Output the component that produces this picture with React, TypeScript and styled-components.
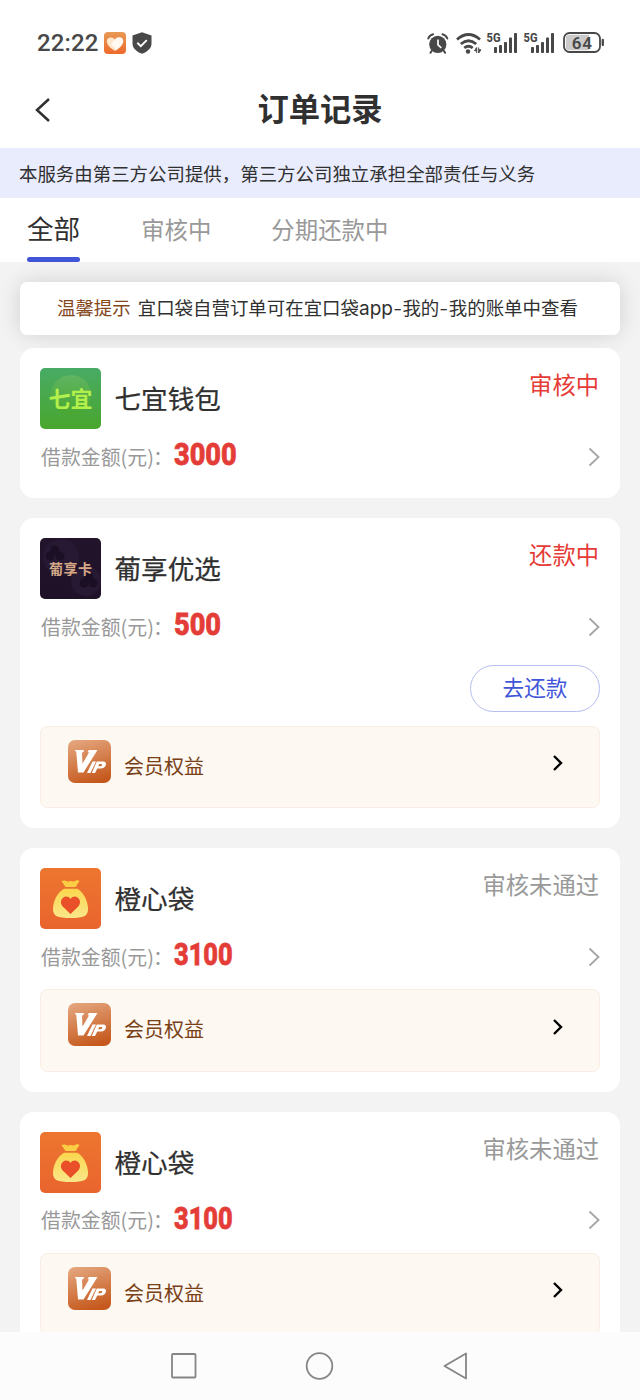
import React from 'react';
import styled, { createGlobalStyle } from 'styled-components';

const Global = createGlobalStyle`
  * { box-sizing: border-box; }
  body {
    margin: 0;
    background: #f3f3f4;
    font-family: "Noto Sans CJK SC", sans-serif;
    color: #303030;
    overflow: hidden;
  }
  svg { display: block; flex: none; overflow: visible; }
`;

const Screen = styled.div`
  width: 640px;
  height: 1400px;
  display: flex;
  flex-direction: column;
  overflow: hidden;
  background: #f3f3f4;
`;

const StatusBar = styled.div`
  height: 86px;
  flex: none;
  background: #fff;
  display: flex;
  align-items: center;
  justify-content: space-between;
  padding: 0 35px 0 37px;
`;

const StatusGroup = styled.div<{ $gap: number }>`
  display: flex;
  align-items: center;
  gap: ${(p) => p.$gap}px;
`;

const Clock = styled.span`
  width: 61px;
  font: 500 24px/30px Roboto, sans-serif;
  letter-spacing: 0.1px;
  color: #484848;
  white-space: nowrap;
`;

const Header = styled.header`
  height: 62px;
  flex: none;
  background: #fff;
  display: grid;
  grid-template-columns: 80px 1fr 80px;
  align-items: center;
  padding-bottom: 16px;
`;

const BackButton = styled.button`
  border: 0;
  background: none;
  padding: 2px 0 0 34px;
`;

const Title = styled.h1`
  margin: 0;
  padding-bottom: 2px;
  text-align: center;
  font-size: 31.3px;
  line-height: 44px;
  font-weight: 700;
`;

const Notice = styled.div`
  height: 50px;
  flex: none;
  padding-left: 19px;
  background: #e9ecfd;
  font-size: 18.45px;
  line-height: 50px;
  white-space: nowrap;
`;

const Tabs = styled.nav`
  height: 64px;
  flex: none;
  display: flex;
  background: #fff;
  padding-left: 27px;
`;

const Tab = styled.div<{ $active?: boolean; $gap?: number }>`
  display: flex;
  flex-direction: column;
  justify-content: space-between;
  margin-right: ${(p) => p.$gap ?? 0}px;
  font-size: ${(p) => (p.$active ? 26.6 : 23.4)}px;
  line-height: ${(p) => (p.$active ? 59 : 63)}px;
  color: ${(p) => (p.$active ? '#303030' : '#999')};
  white-space: nowrap;
  &::after {
    content: "";
    display: ${(p) => (p.$active ? 'block' : 'none')};
    height: 5px;
    border-radius: 3px;
    background: #4155d9;
  }
`;

const Content = styled.main`
  flex: 1;
  min-height: 0;
  overflow: hidden;
  padding: 20px 20px 0;
`;

const Tip = styled.div`
  height: 53px;
  border-radius: 7px;
  background: #fff;
  box-shadow: 0 0 22px rgba(0, 0, 0, 0.14);
  padding-left: 37px;
  font-size: 18.45px;
  line-height: 50px;
  white-space: nowrap;
  margin-bottom: 13px;
`;

const TipLabel = styled.span`
  color: #84471c;
  margin-right: 7px;
`;

const Latin = styled.span`
  font-family: Inter, sans-serif;
  font-size: 19px;
  line-height: 1;
`;

const Dash = styled.span`
  display: inline-block;
  width: 9.5px;
  line-height: 1;
  text-align: center;
  transform: scaleX(1.3);
`;

const Card = styled.section`
  border-radius: 14px;
  background: #fff;
  padding: 20px;
  margin-bottom: 20px;
`;

const CardTop = styled.div`
  display: flex;
  height: 61px;
`;

const Name = styled.div`
  margin-left: 13.5px;
  flex: 1;
  font-size: 26.6px;
  line-height: 59px;
  font-weight: 400;
  -webkit-text-stroke: 0.25px #303030;
`;

const Status = styled.div<{ $muted: boolean }>`
  margin-right: 1px;
  font-size: 23.3px;
  line-height: 32px;
  color: ${(p) => (p.$muted ? '#999' : '#e63b36')};
`;

const AmountRow = styled.div`
  display: flex;
  align-items: center;
  height: 49px;
  padding: 6px 0 0 1px;
`;

const AmountLabel = styled.span`
  width: 132.5px;
  font-size: 19.9px;
  line-height: 30px;
  color: #999;
  white-space: nowrap;
`;

const Colon = styled.span`
  margin-left: -1px;
`;

const Amount = styled.span<{ $scale: number }>`
  flex: 1;
  font: 800 32px/36px Roboto, sans-serif;
  -webkit-text-stroke: 0.8px #e43d37;
  color: #e43d37;
  transform: scaleX(${(p) => p.$scale});
  transform-origin: left center;
  padding-bottom: 5px;
`;

const Actions = styled.div`
  display: flex;
  justify-content: flex-end;
  margin: 17px 0 13.5px;
`;

const PayButton = styled.button`
  width: 130px;
  height: 47px;
  border: 1.5px solid #b6bdf0;
  border-radius: 24px;
  background: #fff;
  color: #4155d9;
  font: 400 21.6px/40px "Noto Sans CJK SC", sans-serif;
  padding: 0 0 3px;
`;

const Benefits = styled.div`
  height: 82.5px;
  margin: 11px 0 0;
  border: 1px solid #faeee4;
  border-radius: 7px;
  background: #fdf8f2;
  display: flex;
  align-items: flex-start;
  padding: 13px 34px 0 27px;
`;

const BenefitsLabel = styled.span`
  flex: 1;
  margin-left: 13px;
  font-size: 20px;
  line-height: 51px;
  color: #793f16;
`;

const ChevronSlot = styled.span`
  padding-top: 14.5px;
`;

const NavBar = styled.footer`
  height: 68px;
  flex: none;
  background: #fcfcfc;
  display: flex;
  justify-content: center;
  align-items: center;
  gap: 108px;
`;

const StatusHeart = () => (
  <svg width="22" height="22" viewBox="0 0 22 22">
    <defs>
      <linearGradient id="heartBg" x1="0" y1="0" x2="0" y2="1">
        <stop offset="0" stopColor="#e89a55" />
        <stop offset="1" stopColor="#ed6a2c" />
      </linearGradient>
    </defs>
    <rect width="22" height="22" rx="4" fill="url(#heartBg)" />
    <path d="M11 19C6 15.8 2.8 12.8 2.8 9c0-3.8 5.4-5 8.2-1.5C13.5 3.8 19.2 5 19.2 9.2c0 3.5-3.4 6.8-8.2 9.8z" fill="#ffe6cc" />
    <path d="M11 7.5C13.5 3.8 19.2 5 19.2 9.2c0 3-3 6-7 8.5L7 12z" fill="#fff" opacity=".75" />
  </svg>
);

const Shield = () => (
  <svg width="20" height="22" viewBox="0 0 20 22">
    <path d="M10 .3L19.5 3.5v8c0 5-4.5 8.5-9.5 10.3C5 20 .5 16.5.5 11.5v-8z" fill="#484848" />
    <path d="M5.3 10.8l3.5 3.3 6-6" fill="none" stroke="#fff" strokeWidth="1.9" />
  </svg>
);

const Alarm = () => (
  <svg width="21" height="21" viewBox="0 0 21 21">
    <circle cx="9.8" cy="11.3" r="8.6" fill="#484848" />
    <path d="M.3 5.5Q1.6 2.2 5.1 1.3M19.3 5.5Q18 2.2 14.5 1.3M4 17.5l-1.5 2.3M15.6 17.5l1.5 2.3" fill="none" stroke="#484848" strokeWidth="2" strokeLinecap="round" />
    <path d="M10 6.5v5.3l3.3 3" fill="none" stroke="#fff" strokeWidth="1.7" />
  </svg>
);

const Wifi = () => (
  <svg width="24" height="21" viewBox="0 0 24 21">
    <g fill="none" stroke="#484848" strokeWidth="2.8">
      <path d="M1 6.5Q12.5-3.5 24 6.5" />
      <path d="M4.8 11Q12.5 4.5 20.2 11" />
      <path d="M8.3 15Q12.5 11.5 16.7 15" />
    </g>
    <circle cx="12" cy="18.5" r="2.2" fill="#484848" />
    <path d="M20.7 20v-5.5l-2.2 3.2h2.2M22.7 14.5V20l2.2-3.2h-2.2" fill="#484848" stroke="#484848" strokeWidth="1" />
  </svg>
);

const Signal = () => (
  <svg width="30" height="24" viewBox="0 0 30 24">
    <text x="-.5" y="10.8" fontFamily="Roboto" fontWeight="800" fontSize="13" textLength="14" lengthAdjust="spacingAndGlyphs" fill="#484848">5G</text>
    {[6, 8, 11, 15.5, 20].map((h, i) => (
      <rect key={h} x={7 + i * 5} y={22 - h} width="3" height={h} rx=".8" fill="#484848" />
    ))}
  </svg>
);

const Battery = () => (
  <svg width="44" height="22" viewBox="-2 0 44 22">
    <rect x="1" y="1" width="36" height="19" rx="5.5" fill="#fff" stroke="#484848" strokeWidth="1.8" />
    <path d="M6 2.8h20v15.4H6a3 3 0 0 1-3.2-3V6A3 3 0 0 1 6 2.8z" fill="#cbcbcb" />
    <path d="M39.8 8v5" stroke="#484848" strokeWidth="2.3" strokeLinecap="round" />
    <text x="19.3" y="16.7" textAnchor="middle" fontFamily="Roboto" fontWeight="600" fontSize="17" letterSpacing=".8" fill="#484848">64</text>
  </svg>
);

type LogoKind = 'qiyi' | 'puxiang' | 'bag';

const Logo = ({ kind, id }: { kind: LogoKind; id: string }) => (
  <svg width="61" height="61" viewBox="0 0 61 61">
    <defs>
      <linearGradient id={`${id}-bg`} x1="0" y1="0" x2="0" y2="1">
        <stop offset="0" stopColor={kind === 'qiyi' ? '#48ab65' : kind === 'bag' ? '#ed762f' : '#21142b'} />
        <stop offset="1" stopColor={kind === 'qiyi' ? '#49a62d' : kind === 'bag' ? '#e9642e' : '#1e1128'} />
      </linearGradient>
      <linearGradient id={`${id}-fg`} x1="0" y1="0" x2="0" y2="1">
        <stop offset="0" stopColor={kind === 'qiyi' ? '#69b962' : '#fbd64e'} />
        <stop offset="1" stopColor={kind === 'qiyi' ? '#49a62d' : '#fae78a'} />
      </linearGradient>
    </defs>
    <rect width="61" height="61" rx="5" fill={`url(#${id}-bg)`} />
    {kind === 'qiyi' && (
      <>
        <circle cx="31" cy="27" r="20" fill={`url(#${id}-fg)`} opacity=".7" />
        <text x="30.5" y="38.8" textAnchor="middle" fontFamily="Noto Sans CJK SC" fontWeight="700" fontSize="22" fill="#b4f04b">七宜</text>
      </>
    )}
    {kind === 'puxiang' && (
      <>
        <circle cx="21" cy="19" r="18" fill="#271933" />
        <circle cx="46" cy="43" r="15" fill="#271933" />
        <g fill="#1b0f25">
          <circle cx="15" cy="12" r="4.5" /><circle cx="10" cy="18" r="4.5" /><circle cx="20" cy="18" r="4.5" />
          <circle cx="49" cy="39" r="4.5" /><circle cx="44" cy="45" r="4.5" /><circle cx="53" cy="45" r="4.5" />
        </g>
        <text x="9" y="36" textLength="43" lengthAdjust="spacing" fontFamily="Noto Sans CJK SC" fontWeight="600" fontSize="14" fill="#d5a785">葡享卡</text>
      </>
    )}
    {kind === 'bag' && (
      <>
        <path d="M21.5 13c2.5-1 4.5-.5 6 .7 2-1 4.500-1 6.500 0 1.500-1.500 3.500-2 5.500-.7l-4 6h-10z" fill="#fbcf43" />
        <path d="M24 20.700h13.500c6.500 3.800 10.500 13 10.500 20.300 0 7-4 9-17.500 9S13 48 13 41c0-7.300 4-16.500 11-20.300z" fill={`url(#${id}-fg)`} />
        <path d="M30.500 46L22.700 38.500c-5.500-6.500 3.300-14 7.800-7.500 4.500-6.500 13.300 1 7.800 7.500z" fill="#e94f28" />
      </>
    )}
  </svg>
);

const VipIcon = ({ id }: { id: string }) => (
  <svg width="43" height="43" viewBox="0 0 43 43">
    <defs>
      <linearGradient id={`${id}-vip`} x1="0.3" y1="0" x2="0.6" y2="1">
        <stop offset="0" stopColor="#e3a37a" />
        <stop offset="1" stopColor="#c5581c" />
      </linearGradient>
    </defs>
    <rect width="43" height="43" rx="7" fill={`url(#${id}-vip)`} />
    <path d="M6.500 10h9.500l-.5 2-1.500.5.500 11 6.500-11-1.300-.5L20.800 10h8.700L15.500 32.500H10L8.300 12z" fill="#fff" />
    <path d="M24.500 21.500h3.500L22.500 33H19zM28.800 21.500h6.700c4 0 3 7-2.500 7h-3.700L27 33h-3.200zM31.200 24l-1 2.200h2.300c1.800 0 2.300-2.200.7-2.200z" fill="#fff" fillRule="evenodd" />
  </svg>
);

interface Order {
  id: string;
  logo: LogoKind;
  name: string;
  amount: string;
  status: string;
  muted: boolean;
  pay: boolean;
  vip: boolean;
}

const orders: Order[] = [
  { id: 'o1', logo: 'qiyi', name: '七宜钱包', amount: '3000', status: '审核中', muted: false, pay: false, vip: false },
  { id: 'o2', logo: 'puxiang', name: '葡享优选', amount: '500', status: '还款中', muted: false, pay: true, vip: true },
  { id: 'o3', logo: 'bag', name: '橙心袋', amount: '3100', status: '审核未通过', muted: true, pay: false, vip: true },
  { id: 'o4', logo: 'bag', name: '橙心袋', amount: '3100', status: '审核未通过', muted: true, pay: false, vip: true },
];

const OrderCard = ({ order }: { order: Order }) => (
  <Card>
    <CardTop>
      <Logo kind={order.logo} id={order.id} />
      <Name>{order.name}</Name>
      <Status $muted={order.muted}>{order.status}</Status>
    </CardTop>
    <AmountRow>
      <AmountLabel>借款金额(元)<Colon>：</Colon></AmountLabel>
      <Amount $scale={order.amount.includes('1') ? 0.795 : 0.85}>{order.amount}</Amount>
      <svg width="12" height="20" viewBox="0 0 12 20">
        <path d="M1.500 1.500l9 8.500-9 8.500" fill="none" stroke="#a5a5a5" strokeWidth="1.8" />
      </svg>
    </AmountRow>
    {order.pay && (
      <Actions>
        <PayButton>去还款</PayButton>
      </Actions>
    )}
    {order.vip && (
      <Benefits>
        <VipIcon id={order.id} />
        <BenefitsLabel>会员权益</BenefitsLabel>
        <ChevronSlot>
          <svg width="14" height="18" viewBox="0 0 14 18">
            <path d="M3 2l7 7-7 7" fill="none" stroke="#000" strokeWidth="2.4" />
          </svg>
        </ChevronSlot>
      </Benefits>
    )}
  </Card>
);

export default function App() {
  return (
    <Screen>
      <Global />
      <StatusBar>
        <StatusGroup $gap={6}>
          <Clock>22:22</Clock>
          <StatusHeart />
          <Shield />
        </StatusGroup>
        <StatusGroup $gap={7}>
          <Alarm />
          <Wifi />
          <Signal />
          <Signal />
          <Battery />
        </StatusGroup>
      </StatusBar>
      <Header>
        <BackButton aria-label="返回">
          <svg width="17" height="26" viewBox="0 0 17 26">
            <path d="M15 2L3 13l12 11" fill="none" stroke="#303030" strokeWidth="2.5" />
          </svg>
        </BackButton>
        <Title>订单记录</Title>
      </Header>
      <Notice>本服务由第三方公司提供，第三方公司独立承担全部责任与义务</Notice>
      <Tabs>
        <Tab $active $gap={61}>全部</Tab>
        <Tab $gap={60}>审核中</Tab>
        <Tab>分期还款中</Tab>
      </Tabs>
      <Content>
        <Tip>
          <TipLabel>温馨提示</TipLabel>
          宜口袋自营订单可在宜口袋<Latin>app</Latin><Dash>-</Dash>我的<Dash>-</Dash>我的账单中查看
        </Tip>
        {orders.map((o) => (
          <OrderCard key={o.id} order={o} />
        ))}
      </Content>
      <NavBar>
        <svg width="28" height="28" viewBox="0 0 28 28">
          <rect x="2" y="2" width="23.5" height="23.5" rx="1" fill="none" stroke="#858585" strokeWidth="1.8" />
        </svg>
        <svg width="28" height="28" viewBox="0 0 28 28">
          <circle cx="13.5" cy="14" r="12.8" fill="none" stroke="#858585" strokeWidth="1.8" />
        </svg>
        <svg width="28" height="28" viewBox="0 0 28 28">
          <path d="M24 1.500v25L2.500 14z" fill="none" stroke="#858585" strokeWidth="1.8" strokeLinejoin="round" />
        </svg>
      </NavBar>
    </Screen>
  );
}
